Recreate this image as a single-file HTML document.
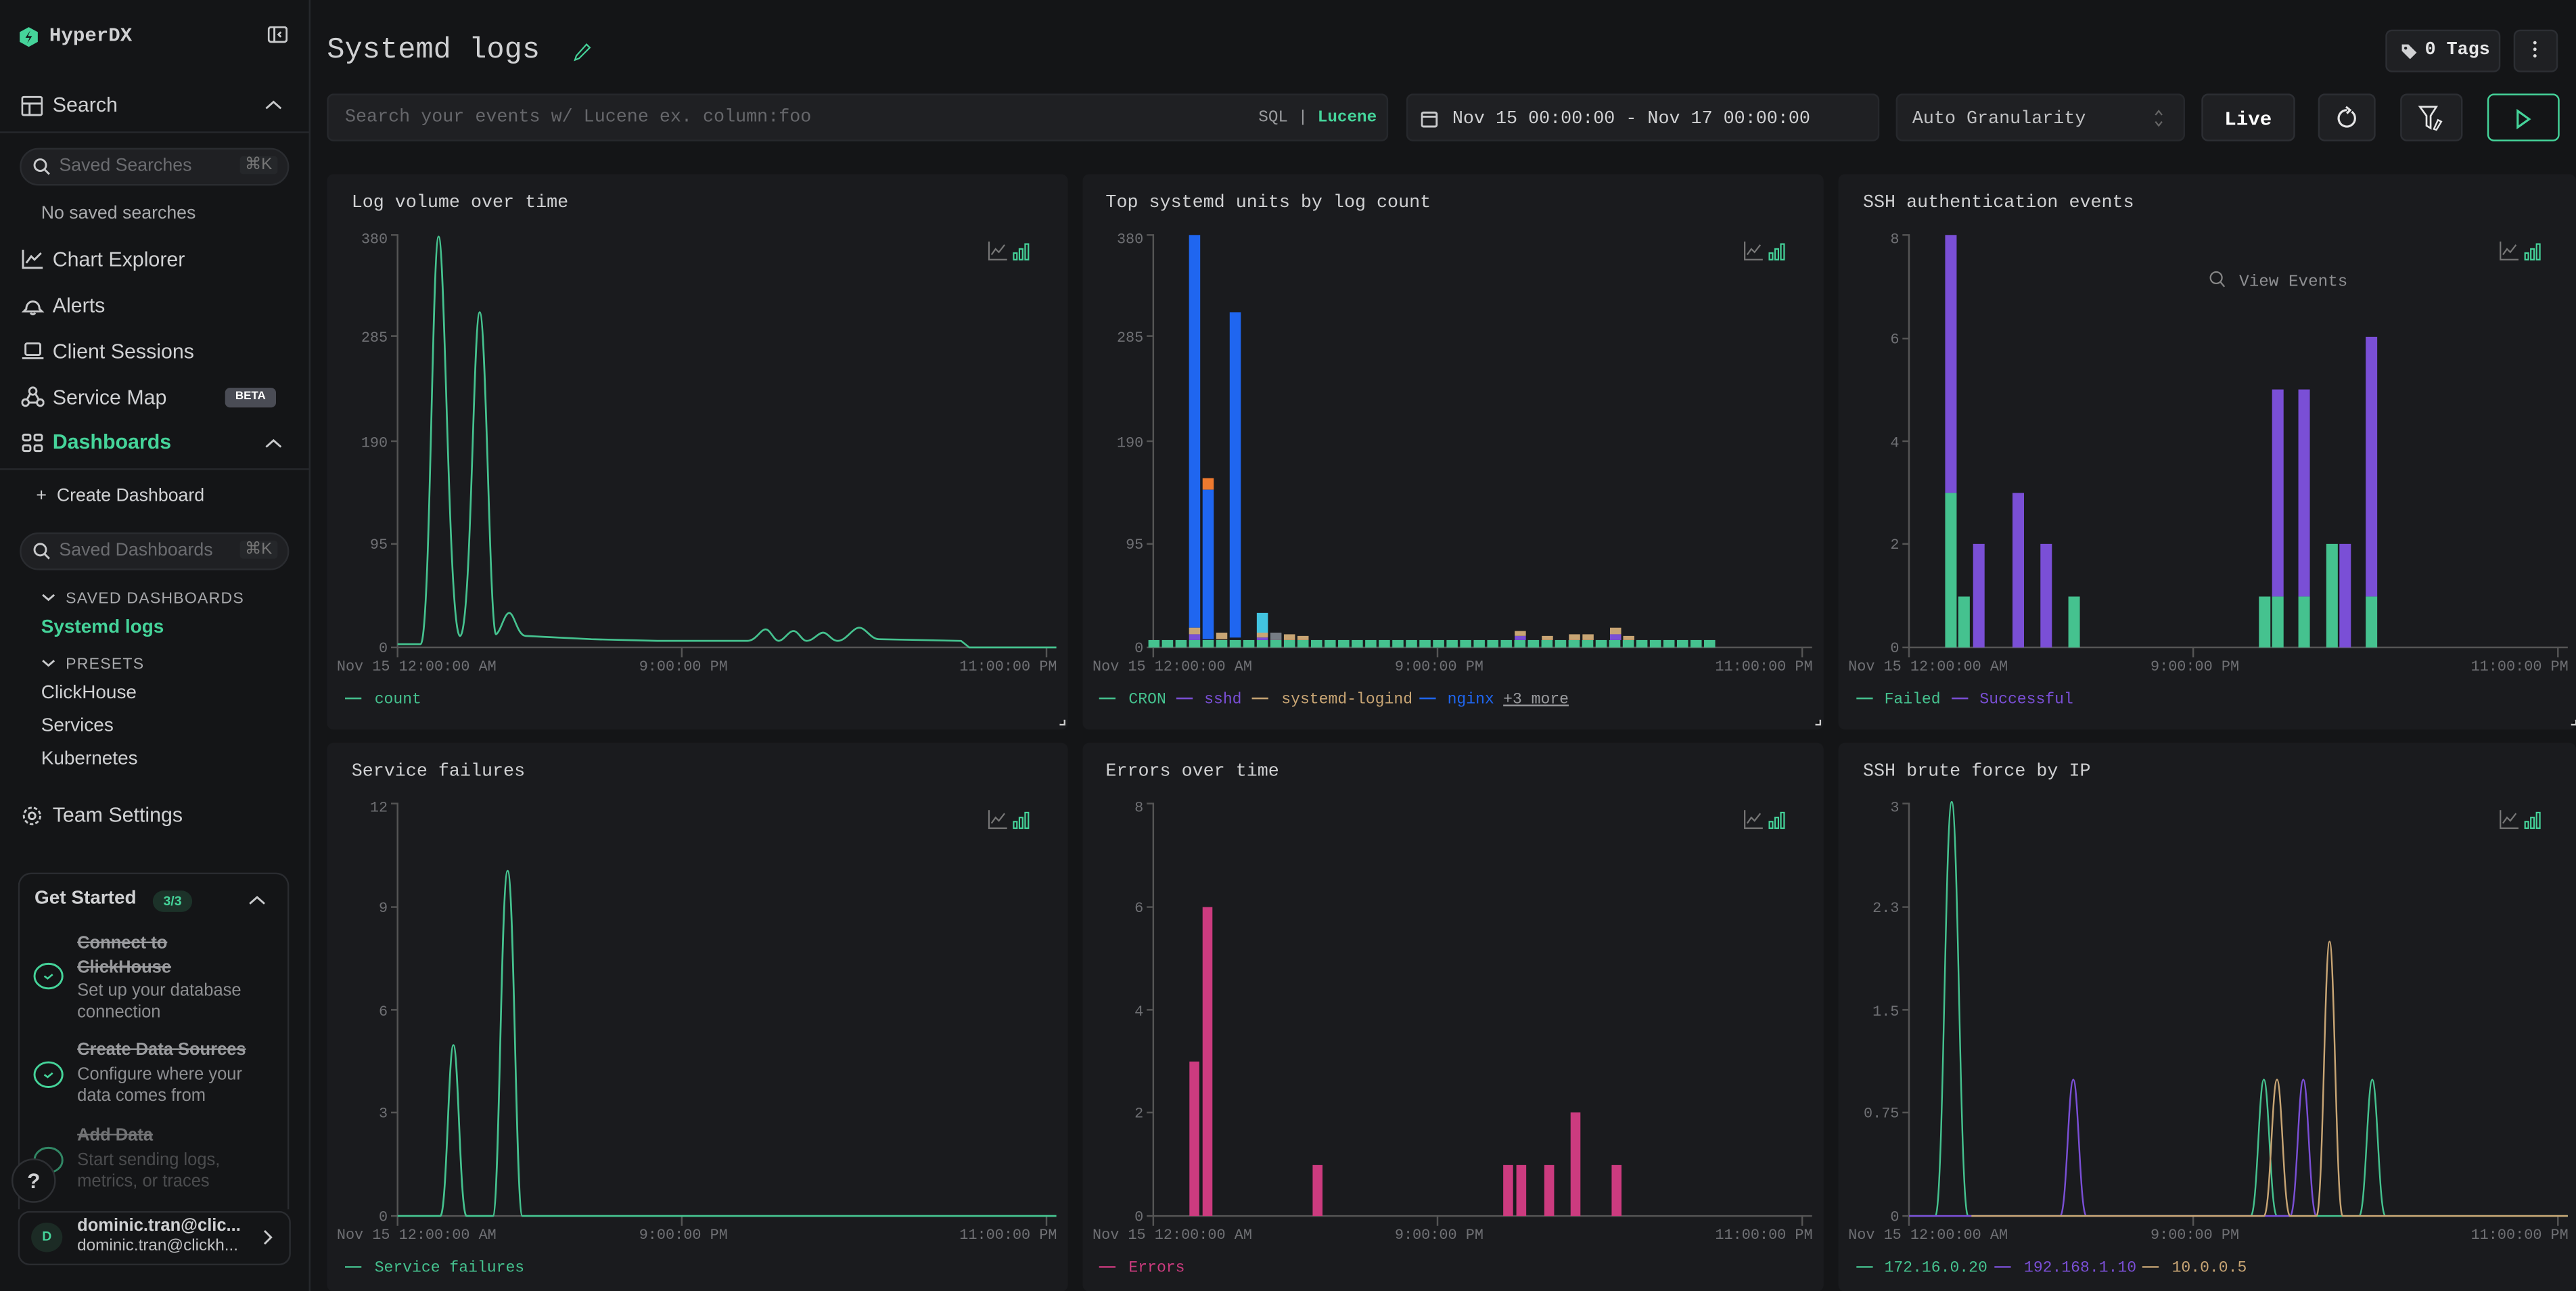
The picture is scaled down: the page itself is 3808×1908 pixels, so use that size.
<!DOCTYPE html>
<html><head><meta charset="utf-8"><style>
*{box-sizing:border-box;margin:0;padding:0}
html,body{width:3808px;height:1908px;overflow:hidden;background:#141517}
#r{width:1568px;height:786px;transform:scale(2.428571);transform-origin:0 0;position:relative;background:#141517;font-family:"Liberation Sans",sans-serif;color:#c9cacc}
.a{position:absolute;white-space:nowrap}
.m{font-family:"Liberation Mono",monospace}
.nav{font-size:12.5px;color:#d0d1d3}
.panel{position:absolute;background:#1a1b1e;border-radius:4px}
.btn{position:absolute;background:#1f2023;border:1px solid #2c2e33;border-radius:4px}
.ic{stroke:#c9cacc;fill:none;stroke-width:1.2}
.st{text-decoration:line-through;color:#9a9b9e;font-weight:bold}
.sub{color:#8e8f92}
</style></head><body><div id="r">
<!-- sidebar -->
<div class="a" style="left:0;top:0;width:189px;height:786px;border-right:1px solid #26282c;background:#141517"></div>
<svg class="a" style="left:11px;top:16px" width="13" height="13" viewBox="0 0 13 13"><polygon points="6.5,0.5 12,3.5 12,9.5 6.5,12.5 1,9.5 1,3.5" fill="#45d49a"/><path d="M7.5 2.5 L4.5 7 L7 7 L5.5 10.5 L8.5 6 L6 6Z" fill="#141517"/></svg>
<div class="a m" style="left:30px;top:15px;font-size:12px;font-weight:bold;color:#d0d1d3">HyperDX</div>
<svg class="a" style="left:163px;top:16px" width="12" height="11"><rect x="0.5" y="0.5" width="11" height="9" rx="1.5" class="ic"/><line x1="4" y1="1" x2="4" y2="10" class="ic"/><path d="M8 3.5 L6.5 5 L8 6.5" class="ic"/></svg>

<svg class="a" style="left:13px;top:58px" width="13" height="13"><rect x="0.5" y="1" width="12" height="11" rx="1" class="ic"/><line x1="0.5" y1="5" x2="12.5" y2="5" class="ic"/><line x1="5" y1="5" x2="5" y2="12" class="ic"/></svg>
<div class="a nav" style="left:32px;top:57px">Search</div>
<svg class="a" style="left:161px;top:61px" width="11" height="6"><path d="M1 5 L5.5 1 L10 5" class="ic" stroke="#888"/></svg>
<div class="a" style="left:0;top:80px;width:189px;height:1px;background:#26282c"></div>
<div class="a" style="left:12px;top:90px;width:164px;height:23px;border-radius:12px;background:#1f2023;border:1px solid #2a2c30"></div>
<svg class="a" style="left:20px;top:96px" width="11" height="11"><circle cx="4.5" cy="4.5" r="3.5" class="ic" stroke="#888"/><line x1="7" y1="7" x2="10" y2="10" class="ic" stroke="#888"/></svg>
<div class="a" style="left:36px;top:95px;font-size:11px;color:#6b6c70">Saved Searches</div>
<div class="a" style="left:146px;top:95px;font-size:10px;color:#777;background:#25272a;padding:0 3px;border-radius:2px">⌘K</div>
<div class="a" style="left:25px;top:124px;font-size:11px;color:#a9aaad">No saved searches</div>

<svg class="a" style="left:13px;top:151px" width="14" height="13"><path d="M1 1 V12 H13 M3 9 L6 5 L8 7 L12 3" class="ic"/></svg>
<div class="a nav" style="left:32px;top:151px">Chart Explorer</div>
<svg class="a" style="left:13px;top:179px" width="14" height="13"><path d="M3 9 C3 3 11 3 11 9 L12.5 10.5 H1.5Z M5.5 11.5 Q7 13 8.5 11.5" class="ic"/></svg>
<div class="a nav" style="left:32px;top:179px">Alerts</div>
<svg class="a" style="left:13px;top:207px" width="14" height="13"><rect x="2.5" y="2" width="9" height="7" rx="1" class="ic"/><line x1="0.5" y1="11" x2="13.5" y2="11" class="ic"/></svg>
<div class="a nav" style="left:32px;top:207px">Client Sessions</div>
<svg class="a" style="left:13px;top:235px" width="14" height="13"><circle cx="7" cy="3" r="2.2" class="ic"/><circle cx="2.5" cy="10" r="2" class="ic"/><circle cx="11.5" cy="10" r="2" class="ic"/><path d="M5.5 4.5 L3.5 8 M8.5 4.5 L10.5 8 M4.5 10 H9.5" class="ic"/></svg>
<div class="a nav" style="left:32px;top:235px">Service Map</div>
<div class="a" style="left:137px;top:236px;width:31px;height:12px;background:#4a4c55;border-radius:3px;font-size:7px;font-weight:bold;color:#fff;text-align:center;line-height:12px">BETA</div>
<svg class="a" style="left:13px;top:263px" width="14" height="13"><rect x="1" y="1.5" width="4.5" height="3.5" rx="1" class="ic" stroke="#45d49a"/><rect x="8" y="1.5" width="4.5" height="3.5" rx="1" class="ic" stroke="#45d49a"/><rect x="1" y="8" width="4.5" height="3.5" rx="1" class="ic" stroke="#45d49a"/><rect x="8" y="8" width="4.5" height="3.5" rx="1" class="ic" stroke="#45d49a"/></svg>
<div class="a nav" style="left:32px;top:262px;color:#45d49a;font-weight:bold">Dashboards</div>
<svg class="a" style="left:161px;top:267px" width="11" height="6"><path d="M1 5 L5.5 1 L10 5" class="ic" stroke="#888"/></svg>
<div class="a" style="left:0;top:285px;width:189px;height:1px;background:#26282c"></div>
<div class="a" style="left:22px;top:296px;font-size:11px;color:#d0d1d3">+&nbsp;&nbsp;Create Dashboard</div>
<div class="a" style="left:12px;top:324px;width:164px;height:23px;border-radius:12px;background:#1f2023;border:1px solid #2a2c30"></div>
<svg class="a" style="left:20px;top:330px" width="11" height="11"><circle cx="4.5" cy="4.5" r="3.5" class="ic" stroke="#888"/><line x1="7" y1="7" x2="10" y2="10" class="ic" stroke="#888"/></svg>
<div class="a" style="left:36px;top:329px;font-size:11px;color:#6b6c70">Saved Dashboards</div>
<div class="a" style="left:146px;top:329px;font-size:10px;color:#777;background:#25272a;padding:0 3px;border-radius:2px">⌘K</div>
<svg class="a" style="left:25px;top:361px" width="9" height="5"><path d="M1 1 L4.5 4 L8 1" class="ic" stroke="#888"/></svg>
<div class="a" style="left:40px;top:359px;font-size:9.5px;color:#a9aaad;letter-spacing:0.5px">SAVED DASHBOARDS</div>
<div class="a" style="left:25px;top:376px;font-size:11.5px;color:#45d49a;font-weight:bold">Systemd logs</div>
<svg class="a" style="left:25px;top:401px" width="9" height="5"><path d="M1 1 L4.5 4 L8 1" class="ic" stroke="#888"/></svg>
<div class="a" style="left:40px;top:399px;font-size:9.5px;color:#a9aaad;letter-spacing:0.5px">PRESETS</div>
<div class="a" style="left:25px;top:416px;font-size:11.5px;color:#d0d1d3">ClickHouse</div>
<div class="a" style="left:25px;top:436px;font-size:11.5px;color:#d0d1d3">Services</div>
<div class="a" style="left:25px;top:456px;font-size:11.5px;color:#d0d1d3">Kubernetes</div>
<svg class="a" style="left:13px;top:490px" width="13" height="13"><circle cx="6.5" cy="6.5" r="2" class="ic"/><circle cx="6.5" cy="6.5" r="5" class="ic" stroke-dasharray="2.2 1.3"/></svg>
<div class="a nav" style="left:32px;top:489px">Team Settings</div>

<div class="a" style="left:11px;top:531px;width:165px;height:205px;border:1px solid #2a2c30;border-bottom:none;border-radius:8px 8px 0 0"></div>
<div class="a" style="left:21px;top:541px;font-size:11.5px;font-weight:bold;color:#d0d1d3">Get Started</div>
<div class="a" style="left:93px;top:542px;width:24px;height:13px;border-radius:7px;background:#1c3229;color:#45d49a;font-size:8px;font-weight:bold;text-align:center;line-height:13px">3/3</div>
<svg class="a" style="left:151px;top:545px" width="11" height="6"><path d="M1 5 L5.5 1 L10 5" class="ic" stroke="#aaa"/></svg>
<svg class="a" style="left:20px;top:585px" width="19" height="18"><ellipse cx="9.5" cy="9" rx="8.5" ry="7.5" fill="none" stroke="#45d49a" stroke-width="1.2"/><path d="M7 9 L9 10.5 L12 8" fill="none" stroke="#45d49a" stroke-width="1.1"/></svg>
<div class="a" style="left:47px;top:567px;font-size:10.5px;line-height:15px"><span class="st">Connect to</span><br><span class="st">ClickHouse</span></div>
<div class="a sub" style="left:47px;top:597px;font-size:10.5px;line-height:13px">Set up your database<br>connection</div>
<svg class="a" style="left:20px;top:645px" width="19" height="18"><ellipse cx="9.5" cy="9" rx="8.5" ry="7.5" fill="none" stroke="#45d49a" stroke-width="1.2"/><path d="M7 9 L9 10.5 L12 8" fill="none" stroke="#45d49a" stroke-width="1.1"/></svg>
<div class="a st" style="left:47px;top:633px;font-size:10.5px">Create Data Sources</div>
<div class="a sub" style="left:47px;top:648px;font-size:10.5px;line-height:13px">Configure where your<br>data comes from</div>
<svg class="a" style="left:20px;top:697px;opacity:.6" width="19" height="18"><ellipse cx="9.5" cy="9" rx="8.5" ry="7.5" fill="none" stroke="#45d49a" stroke-width="1.2"/></svg>
<div class="a st" style="left:47px;top:685px;font-size:10.5px;opacity:.7">Add Data</div>
<div class="a sub" style="left:47px;top:700px;font-size:10.5px;line-height:13px;opacity:.45">Start sending logs,<br>metrics, or traces</div>
<div class="a" style="left:7px;top:705px;width:27px;height:27px;border-radius:50%;background:#141517;border:1px solid #2e3034;font-size:13px;font-weight:bold;color:#d0d1d3;text-align:center;line-height:25px">?</div>
<div class="a" style="left:11px;top:737px;width:166px;height:33px;border:1px solid #2a2c30;border-radius:7px;background:#141517"></div>
<div class="a" style="left:19px;top:744px;width:19px;height:18px;border-radius:50%;background:#1c2b25;color:#45d49a;font-size:8px;font-weight:bold;text-align:center;line-height:18px">D</div>
<div class="a" style="left:47px;top:740px;font-size:10.5px;font-weight:bold;color:#d0d1d3">dominic.tran@clic...</div>
<div class="a" style="left:47px;top:753px;font-size:10px;color:#c0c1c3">dominic.tran@clickh...</div>
<svg class="a" style="left:160px;top:748px" width="6" height="10"><path d="M1 1 L5 5 L1 9" class="ic" stroke="#aaa"/></svg>

<!-- header -->
<div class="a m" style="left:199px;top:21px;font-size:18px;color:#d0d1d3">Systemd logs</div>
<svg class="a" style="left:349px;top:26px" width="11" height="12"><path d="M8 1 L10 3 L3.5 9.5 L1 10.5 L1.8 8 Z" fill="none" stroke="#45d49a" stroke-width="0.9"/></svg>
<div class="btn" style="left:1452px;top:18px;width:70px;height:26px"></div>
<svg class="a" style="left:1461px;top:26px" width="11" height="11"><path d="M1 1 H5 L10 6 L6 10 L1 5Z" fill="#d0d1d3"/><circle cx="3.3" cy="3.3" r="0.9" fill="#1f2023"/></svg>
<div class="a m" style="left:1476px;top:25px;font-size:11px;font-weight:bold;color:#e6e6e7">0 Tags</div>
<div class="btn" style="left:1530px;top:18px;width:27px;height:26px"></div>
<div class="a" style="left:1542px;top:25px;width:2px;height:2px;background:#ddd;box-shadow:0 4px 0 #ddd,0 8px 0 #ddd;border-radius:1px"></div>

<div class="btn" style="left:199px;top:57px;width:646px;height:29px;border-color:#26282c"></div>
<div class="a m" style="left:210px;top:66px;font-size:11px;color:#66676b">Search your events w/ Lucene ex. column:foo</div>
<div class="a m" style="left:766px;top:67px;font-size:10px;color:#9a9b9e">SQL | <span style="color:#45d49a;font-weight:bold">Lucene</span></div>
<div class="btn" style="left:856px;top:57px;width:288px;height:29px;border-color:#26282c"></div>
<svg class="a" style="left:865px;top:67px" width="11" height="11"><rect x="0.5" y="1.5" width="9" height="8.5" rx="1" class="ic" stroke="#aaa"/><line x1="0.5" y1="4" x2="9.5" y2="4" class="ic" stroke="#aaa"/></svg>
<div class="a m" style="left:884px;top:67px;font-size:11px;color:#d0d1d3">Nov 15 00:00:00 - Nov 17 00:00:00</div>
<div class="btn" style="left:1154px;top:57px;width:176px;height:29px;border-color:#26282c"></div>
<div class="a m" style="left:1164px;top:67px;font-size:11px;color:#c0c1c3">Auto Granularity</div>
<svg class="a" style="left:1311px;top:66px" width="6" height="12"><path d="M1 4 L3 1.5 L5 4 M1 8 L3 10.5 L5 8" fill="none" stroke="#666" stroke-width="0.9"/></svg>
<div class="btn" style="left:1340px;top:57px;width:57px;height:29px"></div>
<div class="a m" style="left:1354px;top:66px;font-size:12px;font-weight:bold;color:#fff">Live</div>
<div class="btn" style="left:1411px;top:57px;width:35px;height:29px"></div>
<svg class="a" style="left:1421px;top:64px" width="15" height="16"><path d="M10.5 4 A5 5 0 1 1 7.5 3 M7 1 L9.5 3 L7.5 5" fill="none" stroke="#e6e6e7" stroke-width="1.3"/></svg>
<div class="btn" style="left:1461px;top:57px;width:38px;height:29px"></div>
<svg class="a" style="left:1472px;top:64px" width="16" height="17"><path d="M1 1 H11 L7.5 6.5 V14 L5 12.5 V6.5 Z" fill="none" stroke="#e6e6e7" stroke-width="1.1"/><path d="M12 9 L14 10 L11 15 L9.5 14.5 Z" fill="none" stroke="#e6e6e7" stroke-width="1"/></svg>
<div class="a" style="left:1514px;top:57px;width:44px;height:29px;border:1px solid #45d49a;border-radius:4px;background:#141517"></div>
<svg class="a" style="left:1531px;top:66px" width="10" height="13"><path d="M1.5 1.5 L8.5 6.5 L1.5 11.5 Z" fill="none" stroke="#45d49a" stroke-width="1.3"/></svg>

<!-- panels -->
<div class="panel" style="left:199px;top:106px;width:451px;height:338px"></div>
<div class="panel" style="left:659px;top:106px;width:451px;height:338px"></div>
<div class="panel" style="left:1119px;top:106px;width:449px;height:338px"></div>
<div class="panel" style="left:199px;top:452px;width:451px;height:334px"></div>
<div class="panel" style="left:659px;top:452px;width:451px;height:334px"></div>
<div class="panel" style="left:1119px;top:452px;width:449px;height:334px"></div>

<svg class="a" style="left:0;top:0" width="1568" height="786" font-family="Liberation Mono, monospace">
<defs>
<pattern id="gb" x="699" y="0" width="8.25" height="786" patternUnits="userSpaceOnUse"><rect x="0" y="0" width="6.8" height="786" fill="#45c28f"/></pattern>
<g id="ci"><path d="M0 0 V11 H11 M1.5 8 L4 4.5 L6 6.5 L9.5 2" fill="none" stroke="#777" stroke-width="0.9"/><g fill="none" stroke="#45d49a" stroke-width="0.9"><rect x="15" y="7" width="2" height="4"/><rect x="18.5" y="4.5" width="2" height="6.5"/><rect x="22" y="1.5" width="2" height="9.5"/></g></g>
</defs>
<g font-size="11" fill="#d0d1d3">
<text x="214" y="126">Log volume over time</text>
<text x="673" y="126">Top systemd units by log count</text>
<text x="1134" y="126">SSH authentication events</text>
<text x="214" y="472">Service failures</text>
<text x="673" y="472">Errors over time</text>
<text x="1134" y="472">SSH brute force by IP</text>
</g>
<use href="#ci" x="602" y="147"/><use href="#ci" x="1062" y="147"/><use href="#ci" x="1522" y="147"/>
<use href="#ci" x="602" y="493"/><use href="#ci" x="1062" y="493"/><use href="#ci" x="1522" y="493"/>
<!-- axes -->
<g stroke="#555" stroke-width="1" fill="none">
<path d="M238 143 H242 V394 H643 M238 204.5 H242 M238 268.5 H242 M238 331 H242 M238 394 H242 M242 394 V400 M415 394 V400 M637 394 V400"/>
<path d="M698 143 H702 V394 H1103 M698 204.5 H702 M698 268.5 H702 M698 331 H702 M698 394 H702 M702 394 V400 M875 394 V400 M1097 394 V400"/>
<path d="M1158 143 H1162 V394 H1563 M1158 206 H1162 M1158 268.5 H1162 M1158 331 H1162 M1158 394 H1162 M1162 394 V400 M1335 394 V400 M1557 394 V400"/>
<path d="M238 489 H242 V740 H643 M238 552 H242 M238 614.5 H242 M238 677 H242 M238 740 H242 M242 740 V746 M415 740 V746 M637 740 V746"/>
<path d="M698 489 H702 V740 H1103 M698 552 H702 M698 614.5 H702 M698 677 H702 M698 740 H702 M702 740 V746 M875 740 V746 M1097 740 V746"/>
<path d="M1158 489 H1162 V740 H1563 M1158 552 H1162 M1158 614.5 H1162 M1158 677 H1162 M1158 740 H1162 M1162 740 V746 M1335 740 V746 M1557 740 V746"/>
</g>
<g font-size="9" fill="#6f7074" text-anchor="end">
<text x="236" y="148">380</text><text x="236" y="208">285</text><text x="236" y="272">190</text><text x="236" y="334">95</text><text x="236" y="397">0</text>
<text x="696" y="148">380</text><text x="696" y="208">285</text><text x="696" y="272">190</text><text x="696" y="334">95</text><text x="696" y="397">0</text>
<text x="1156" y="148">8</text><text x="1156" y="209">6</text><text x="1156" y="272">4</text><text x="1156" y="334">2</text><text x="1156" y="397">0</text>
<text x="236" y="494">12</text><text x="236" y="555">9</text><text x="236" y="618">6</text><text x="236" y="680">3</text><text x="236" y="743">0</text>
<text x="696" y="494">8</text><text x="696" y="555">6</text><text x="696" y="618">4</text><text x="696" y="680">2</text><text x="696" y="743">0</text>
<text x="1156" y="494">3</text><text x="1156" y="555">2.3</text><text x="1156" y="618">1.5</text><text x="1156" y="680">0.75</text><text x="1156" y="743">0</text>
</g>
<g font-size="9" fill="#6f7074">
<text x="205" y="408">Nov 15 12:00:00 AM</text><text x="389" y="408">9:00:00 PM</text><text x="584" y="408">11:00:00 PM</text>
<text x="665" y="408">Nov 15 12:00:00 AM</text><text x="849" y="408">9:00:00 PM</text><text x="1044" y="408">11:00:00 PM</text>
<text x="1125" y="408">Nov 15 12:00:00 AM</text><text x="1309" y="408">9:00:00 PM</text><text x="1504" y="408">11:00:00 PM</text>
<text x="205" y="754">Nov 15 12:00:00 AM</text><text x="389" y="754">9:00:00 PM</text><text x="584" y="754">11:00:00 PM</text>
<text x="665" y="754">Nov 15 12:00:00 AM</text><text x="849" y="754">9:00:00 PM</text><text x="1044" y="754">11:00:00 PM</text>
<text x="1125" y="754">Nov 15 12:00:00 AM</text><text x="1309" y="754">9:00:00 PM</text><text x="1504" y="754">11:00:00 PM</text>
</g>
<!-- panel1 line -->
<path d="M242 392 L256 392 C262 392 263 144 267 144 C271 144 273 387 280 387 C287 387 288 190 292 190 C296 190 298 387 302 386 C305 384 307 373 310 373 C313 373 315 387 320 387 L360 389 L400 390 L455 390 C460 390 463 383 466 383 C469 383 471 390 474 390 C477 390 480 384 483 384 C486 384 488 390 491 390 C495 390 498 385 501 385 C504 385 506 390 510 390 C515 390 519 382 523 382 C527 382 530 389 535 389 L585 390 L590 394 L643 394" fill="none" stroke="#45c28f" stroke-width="1.1"/>
<!-- panel2 bars -->
<rect x="699" y="389.5" width="346" height="4.5" fill="url(#gb)"/>
<rect x="723.75" y="143" width="6.8" height="239" fill="#1f66f0"/><rect x="723.75" y="382" width="6.8" height="4" fill="#c8a574"/><rect x="723.75" y="386" width="6.8" height="3.5" fill="#7a4fd6"/>
<rect x="732" y="291" width="6.8" height="7" fill="#ee7a2f"/><rect x="732" y="298" width="6.8" height="91" fill="#1f66f0"/>
<rect x="748.5" y="190" width="6.8" height="198" fill="#1f66f0"/>
<rect x="740.25" y="385" width="6.8" height="4" fill="#c8a574"/>
<rect x="765" y="373" width="6.8" height="12" fill="#42c4e0"/><rect x="765" y="385" width="6.8" height="3" fill="#c8a574"/><rect x="765" y="388" width="6.8" height="1.5" fill="#7a4fd6"/>
<rect x="773.25" y="385" width="6.8" height="4.5" fill="#777d85"/>
<rect x="781.5" y="386" width="6.8" height="3.5" fill="#c8a574"/>
<rect x="789.75" y="387" width="6.8" height="2.5" fill="#c8a574"/>
<rect x="922" y="384" width="6.8" height="3" fill="#c8a574"/><rect x="922" y="387" width="6.8" height="2.5" fill="#7a4fd6"/>
<rect x="938.5" y="387" width="6.8" height="2.5" fill="#c8a574"/>
<rect x="955" y="386" width="6.8" height="3.5" fill="#c8a574"/>
<rect x="963.25" y="386" width="6.8" height="3.5" fill="#c8a574"/>
<rect x="980" y="382" width="6.8" height="4" fill="#c8a574"/><rect x="980" y="386" width="6.8" height="3.5" fill="#7a4fd6"/>
<rect x="988" y="387" width="6.8" height="2.5" fill="#c8a574"/>
<!-- panel3 bars -->
<g fill="#7a4fd6">
<rect x="1184" y="143" width="7" height="157"/><rect x="1201" y="331" width="7" height="63"/><rect x="1225" y="300" width="7" height="94"/><rect x="1242" y="331" width="7" height="63"/>
<rect x="1383" y="237" width="7" height="126"/><rect x="1399" y="237" width="7" height="126"/><rect x="1424" y="331" width="7" height="63"/><rect x="1440" y="205" width="7" height="158"/>
</g>
<g fill="#45c28f">
<rect x="1184" y="300" width="7" height="94"/><rect x="1192" y="363" width="7" height="31"/><rect x="1259" y="363" width="7" height="31"/>
<rect x="1375" y="363" width="7" height="31"/><rect x="1383" y="363" width="7" height="31"/><rect x="1399" y="363" width="7" height="31"/><rect x="1416" y="331" width="7" height="63"/><rect x="1440" y="363" width="7" height="31"/>
</g>
<circle cx="1349" cy="169" r="3.5" fill="none" stroke="#888" stroke-width="0.9"/><line x1="1351.5" y1="171.5" x2="1354" y2="174.5" stroke="#888" stroke-width="0.9"/>
<text x="1363" y="174" font-size="10" fill="#8e8f92">View Events</text>
<!-- panel4 -->
<path d="M242 740 L268 740 C272 740 273 636 276 636 C279 636 280 740 284 740 L300 740 C304 740 305 530 309 530 C313 530 314 740 318 740 L643 740" fill="none" stroke="#45c28f" stroke-width="1.1"/>
<!-- panel5 -->
<g fill="#cc3b7f">
<rect x="724" y="646" width="6" height="94"/><rect x="732" y="552" width="6" height="188"/><rect x="799" y="709" width="6" height="31"/>
<rect x="915" y="709" width="6" height="31"/><rect x="923" y="709" width="6" height="31"/><rect x="940" y="709" width="6" height="31"/><rect x="956" y="677" width="6" height="63"/><rect x="981" y="709" width="6" height="31"/>
</g>
<!-- panel6 -->
<path d="M1162 740 L1178 740 C1183 740 1184 488 1188 488 C1192 488 1193 740 1198 740 L1370 740 C1374 740 1375 657 1378 657 C1381 657 1382 740 1386 740 L1436 740 C1440 740 1441 657 1444 657 C1447 657 1448 740 1452 740 L1563 740" fill="none" stroke="#45c28f" stroke-width="1"/>
<path d="M1162 740 L1254 740 C1258 740 1259 657 1262 657 C1265 657 1266 740 1270 740 L1394 740 C1398 740 1399 657 1402 657 C1405 657 1406 740 1410 740" fill="none" stroke="#7a4fd6" stroke-width="1"/>
<path d="M1200 740 L1378 740 C1382 740 1383 657 1386 657 C1389 657 1390 740 1394 740 L1410 740 C1414 740 1415 573 1418 573 C1421 573 1422 740 1426 740 L1563 740" fill="none" stroke="#c8a574" stroke-width="1"/>
<!-- legends -->
<g font-size="9.5">
<line x1="210" y1="425" x2="220" y2="425" stroke="#45c28f"/><text x="228" y="428" fill="#45c28f">count</text>
<line x1="669" y1="425" x2="679" y2="425" stroke="#45c28f"/><text x="687" y="428" fill="#45c28f">CRON</text>
<line x1="716" y1="425" x2="726" y2="425" stroke="#7a4fd6"/><text x="733" y="428" fill="#7a4fd6">sshd</text>
<line x1="762" y1="425" x2="772" y2="425" stroke="#c8a574"/><text x="780" y="428" fill="#c8a574">systemd-logind</text>
<line x1="864" y1="425" x2="874" y2="425" stroke="#1f66f0"/><text x="881" y="428" fill="#1f66f0">nginx</text>
<text x="915" y="428" fill="#9a9b9e" text-decoration="underline">+3 more</text>
<line x1="1130" y1="425" x2="1140" y2="425" stroke="#45c28f"/><text x="1147" y="428" fill="#45c28f">Failed</text>
<line x1="1188" y1="425" x2="1198" y2="425" stroke="#7a4fd6"/><text x="1205" y="428" fill="#7a4fd6">Successful</text>
<line x1="210" y1="771" x2="220" y2="771" stroke="#45c28f"/><text x="228" y="774" fill="#45c28f">Service failures</text>
<line x1="669" y1="771" x2="679" y2="771" stroke="#cc3b7f"/><text x="687" y="774" fill="#cc3b7f">Errors</text>
<line x1="1130" y1="771" x2="1140" y2="771" stroke="#45c28f"/><text x="1147" y="774" fill="#45c28f">172.16.0.20</text>
<line x1="1214" y1="771" x2="1224" y2="771" stroke="#7a4fd6"/><text x="1232" y="774" fill="#7a4fd6">192.168.1.10</text>
<line x1="1304" y1="771" x2="1314" y2="771" stroke="#c8a574"/><text x="1322" y="774" fill="#c8a574">10.0.0.5</text>
</g>
<g stroke="#ccc" stroke-width="1"><path d="M645 441 H648 V438 M1105 441 H1108 V438 M1565 441 H1568 V438"/></g>
</svg>
</div></body></html>
